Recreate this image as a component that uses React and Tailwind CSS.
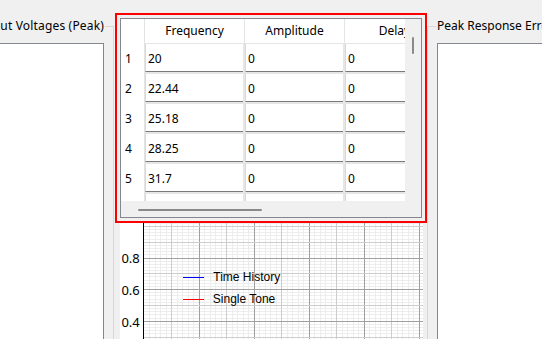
import React from "react";

const rows = [
  ["1", "20"],
  ["2", "22.44"],
  ["3", "25.18"],
  ["4", "28.25"],
  ["5", "31.7"],
  ["6", "35.57"],
];

function Cell({ children }) {
  return (
    <div className="w-[100px] shrink-0 h-full">
      <div className="w-[98px] h-[28px] bg-white border-l border-l-[#d9d9d9] border-b border-b-[#7a7a7a] pl-[2px] pt-[2px] flex items-center leading-[16px]">
        {children}
      </div>
    </div>
  );
}

function Table() {
  return (
    <div className="w-full h-full border border-[#828790] flex flex-col bg-[#f0f0f0]">
      <div className="flex h-[182px] shrink-0">
        <div className="w-[284px] h-full overflow-hidden shrink-0">
          <div className="flex h-[25px] w-max">
            <div className="w-[24px] h-full bg-white border-r border-[#e3e3e3]" />
            {["Frequency", "Amplitude", "Delay"].map((c) => (
              <div
                key={c}
                className="w-[100px] h-full bg-white border-r border-b border-[#e5e5e5] flex items-center justify-center leading-[16px]"
              >
                {c}
              </div>
            ))}
          </div>
          {rows.map(([n, f]) => (
            <div key={n} className="flex h-[30px] w-max bg-[#e6e6e6]">
              <div className="w-[24px] shrink-0 h-full bg-white border-r border-[#e3e3e3] flex items-center pl-[4px] leading-[16px]">
                {n}
              </div>
              <Cell>{f}</Cell>
              <Cell>0</Cell>
              <Cell>0</Cell>
            </div>
          ))}
        </div>
        <div className="w-[16px] h-full pt-[18px] pl-[7px]">
          <div className="w-[2px] h-[17px] rounded-full bg-[#8a8a8a]" />
        </div>
      </div>
      <div className="flex h-[16px] shrink-0">
        <div className="w-[284px] h-full pt-[8px] pl-[17px]">
          <div className="w-[124px] h-[2px] rounded-full bg-[#8a8a8a]" />
        </div>
        <div className="w-[16px] h-full" />
      </div>
    </div>
  );
}

function Chart() {
  const W = 303;
  const H = 116;
  const ox = 120;
  const oy = 223;
  const v = [];
  for (let i = 1; i <= 60; i++) {
    const ax = Math.floor(144.2 + 5.5 * i);
    const x = ax - ox + 0.5;
    if (x > W) break;
    const color = i % 10 === 0 ? "#a0a0a0" : i % 5 === 0 ? "#cdcdcd" : "#ededed";
    v.push({ x, color, z: i % 5 === 0 ? 1 : 0 });
  }
  const h = [];
  for (let i = -11; i <= 30; i++) {
    const ay = Math.floor(258.0 + 3.166 * i);
    const y = ay - oy + 0.5;
    if (y < 0 || y > H) continue;
    let color = "#ededed";
    let z = 0;
    if (i % 5 === 0) {
      const j = i / 5;
      color = j % 2 === 0 && j >= 0 ? "#a0a0a0" : "#cdcdcd";
      z = 1;
    }
    h.push({ y, color, z });
  }
  const minorV = v.filter((l) => !l.z);
  const majorV = v.filter((l) => l.z);
  const minorH = h.filter((l) => !l.z);
  const majorH = h.filter((l) => l.z);
  return (
    <svg width={W} height={H} className="block" shapeRendering="crispEdges">
      <rect x="0" y="0" width={W} height={H} fill="#ffffff" />
      {minorV.map((l, i) => (
        <line key={"mv" + i} x1={l.x} x2={l.x} y1="0" y2={H} stroke={l.color} strokeWidth="1" />
      ))}
      {minorH.map((l, i) => (
        <line key={"mh" + i} x1="24" x2={W} y1={l.y} y2={l.y} stroke={l.color} strokeWidth="1" />
      ))}
      {majorV.map((l, i) => (
        <line key={"Mv" + i} x1={l.x} x2={l.x} y1="0" y2={H} stroke={l.color} strokeWidth="1" />
      ))}
      {majorH.map((l, i) => (
        <line key={"Mh" + i} x1="24" x2={W} y1={l.y} y2={l.y} stroke={l.color} strokeWidth="1" />
      ))}
      <line x1="23.5" x2="23.5" y1="0" y2={H} stroke="#000000" strokeWidth="1" />
      <g fontFamily="'Noto Sans', sans-serif" fontSize="13" fill="#000" textAnchor="end">
        <text x="19.8" y="40.3">0.8</text>
        <text x="19.8" y="72">0.6</text>
        <text x="19.8" y="103.7">0.4</text>
      </g>
      <line x1="63" x2="84" y1="54.5" y2="54.5" stroke="#0000ff" strokeWidth="1" />
      <line x1="63" x2="84" y1="76.5" y2="76.5" stroke="#ff0000" strokeWidth="1" />
      <g fontFamily="'Liberation Sans', Arial, sans-serif" fontSize="12" fill="#000">
        <text x="93.3" y="57.6">Time History</text>
        <text x="92.8" y="79.6">Single Tone</text>
      </g>
    </svg>
  );
}

export default function App() {
  return (
    <div className="w-[542px] h-[339px] overflow-hidden bg-[#f0f0f0] flex font-['Noto_Sans',sans-serif] text-[12px] text-black">
      {/* Left group box */}
      <div className="relative w-[114px] shrink-0 h-full overflow-hidden pt-[26px]">
        <div className="h-full border-t border-r border-[#d8d8d8] pt-[16px] pr-[9px]">
          <div className="h-full bg-white border-t border-r border-[#828790]" />
        </div>
        <span className="absolute top-[18px] right-[9px] pr-[1px] leading-[16px] whitespace-nowrap tracking-[0.17px] bg-[#f0f0f0]">
          Output Voltages (Peak)
        </span>
      </div>

      {/* Middle column */}
      <div className="w-[313px] shrink-0 h-full flex flex-col">
        <div className="ml-[1px] mt-[13px] w-[312px] h-[210px] shrink-0 border-2 border-[#ff0000] p-[3px]">
          <Table />
        </div>
        <div className="ml-[6px] w-[303px] flex-1 bg-white overflow-hidden">
          <Chart />
        </div>
      </div>

      {/* Right group box */}
      <div className="relative flex-1 min-w-0 h-full overflow-hidden pt-[26px]">
        <div className="h-full border-t border-l border-[#d8d8d8] pt-[16px] pl-[9px]">
          <div className="h-full bg-white border-t border-l border-[#828790]" />
        </div>
        <span className="absolute top-[18px] left-[9px] pl-[1px] leading-[16px] whitespace-nowrap bg-[#f0f0f0]">
          Peak Response Error
        </span>
      </div>
    </div>
  );
}
